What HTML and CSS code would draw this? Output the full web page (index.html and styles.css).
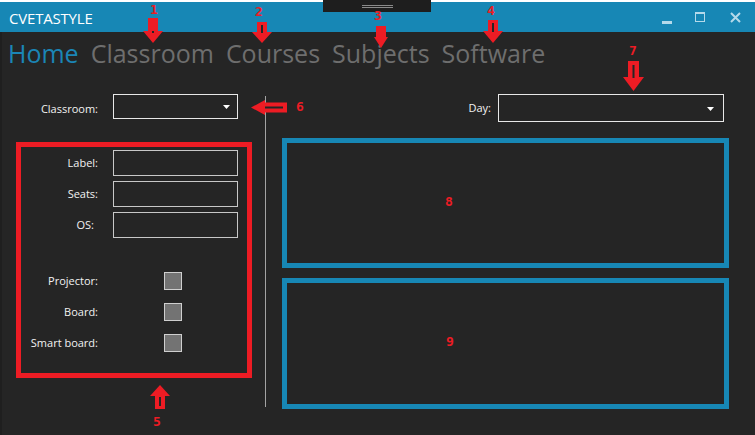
FILE: index.html
```html
<!DOCTYPE html>
<html>
<head>
<meta charset="utf-8">
<title>CVETASTYLE</title>
<link rel="stylesheet" href="styles.css">
</head>
<body>
<div class="window">
  <header class="titlebar">
    <span class="title">CVETASTYLE</span>
    <div class="controls">
      <svg class="ctl ctl-min" width="10" height="10" viewBox="0 0 10 10"><rect x="0" y="7" width="10" height="3" fill="#b4d9ea"/></svg>
      <svg class="ctl ctl-max" width="10" height="10" viewBox="0 0 10 10"><rect x="0.5" y="0.5" width="9" height="9" fill="none" stroke="#b4d9ea" stroke-width="1"/><rect x="0" y="0" width="10" height="2" fill="#b4d9ea"/></svg>
      <svg class="ctl ctl-close" width="11" height="11" viewBox="0 0 11 11"><path d="M1 1 L10 10 M10 1 L1 10" stroke="#b4d9ea" stroke-width="2" fill="none"/></svg>
    </div>
  </header>
  <div class="handle"><i></i><i></i></div>

  <div class="content">
    <nav class="nav">
      <span class="nav-item active">Home</span>
      <span class="nav-item">Classroom</span>
      <span class="nav-item">Courses</span>
      <span class="nav-item">Subjects</span>
      <span class="nav-item">Software</span>
    </nav>

    <div class="main">
      <div class="left">
        <div class="top-row">
          <label class="lbl lbl-top">Classroom:</label>
          <div class="combo combo-small">
            <svg class="caret" width="7" height="4" viewBox="0 0 7 4"><polygon points="0,0 7,0 3.5,4" fill="#ffffff"/></svg>
          </div>
        </div>
        <div class="panel panel-red">
          <div class="row">
            <label class="lbl">Label:</label>
            <div class="textbox"></div>
          </div>
          <div class="row">
            <label class="lbl">Seats:</label>
            <div class="textbox"></div>
          </div>
          <div class="row">
            <label class="lbl lbl-os">OS:</label>
            <div class="textbox"></div>
          </div>
          <div class="row check-row first-check">
            <label class="lbl">Projector:</label>
            <div class="checkbox"></div>
          </div>
          <div class="row check-row">
            <label class="lbl">Board:</label>
            <div class="checkbox"></div>
          </div>
          <div class="row check-row">
            <label class="lbl">Smart board:</label>
            <div class="checkbox"></div>
          </div>
        </div>
      </div>

      <div class="divider-col"><div class="divider"></div></div>

      <div class="right">
        <div class="day-row">
          <label class="lbl-day">Day:</label>
          <div class="combo combo-wide">
            <svg class="caret" width="7" height="4" viewBox="0 0 7 4"><polygon points="0,0 7,0 3.5,4" fill="#ffffff"/></svg>
          </div>
        </div>
        <div class="panel panel-blue panel-8"></div>
        <div class="panel panel-blue panel-9"></div>
      </div>
    </div>
  </div>

  <div class="annotations">
    <span class="num n1">1</span>
    <span class="num n2">2</span>
    <span class="num n3">3</span>
    <span class="num n4">4</span>
    <span class="num n5">5</span>
    <span class="num n6">6</span>
    <span class="num n7">7</span>
    <span class="num n8">8</span>
    <span class="num n9">9</span>

    <svg class="arrow a1" width="20" height="25" viewBox="0 0 20 25"><rect x="5" y="0" width="10" height="14" fill="#ed1c24"/><polygon points="0,13 20,13 10,25" fill="#ed1c24"/><rect x="9" y="13" width="2" height="2" fill="#252525"/></svg>
    <svg class="arrow a2" width="20" height="21" viewBox="0 0 20 21"><rect x="5" y="0" width="10" height="11" fill="#ed1c24"/><polygon points="0,10 20,10 10,21" fill="#ed1c24"/><rect x="9" y="3" width="2" height="8" fill="#252525"/></svg>
    <svg class="arrow a3" width="14" height="22" viewBox="0 0 14 22"><rect x="2" y="0" width="10" height="12" fill="#ed1c24"/><polygon points="0,11 14,11 7,22" fill="#ed1c24"/></svg>
    <svg class="arrow a4" width="20" height="23" viewBox="0 0 20 23"><rect x="5" y="0" width="10" height="12" fill="#ed1c24"/><polygon points="0,11 20,11 10,23" fill="#ed1c24"/><rect x="9" y="3" width="2" height="9" fill="#252525"/></svg>
    <svg class="arrow a5" width="20" height="24" viewBox="0 0 20 24"><polygon points="10,0 20,11 0,11" fill="#ed1c24"/><rect x="5" y="10" width="10" height="14" fill="#ed1c24"/><rect x="9" y="12" width="2" height="9" fill="#252525"/></svg>
    <svg class="arrow a6" width="36" height="15" viewBox="0 0 36 15"><polygon points="0,7.5 14,0 14,15" fill="#ed1c24"/><rect x="13" y="2.5" width="23" height="10" fill="#ed1c24"/><rect x="14" y="6.5" width="18" height="2" fill="#252525"/></svg>
    <svg class="arrow a7" width="21" height="30" viewBox="0 0 21 30"><rect x="5" y="0" width="11" height="17" fill="#ed1c24"/><polygon points="0,16 21,16 10.5,30" fill="#ed1c24"/><rect x="9.5" y="4" width="2" height="13" fill="#252525"/></svg>
  </div>
</div>
</body>
</html>
```

FILE: styles.css
```css
html, body {
  margin: 0;
  padding: 0;
  background: #ffffff;
}

body {
  font-family: "Open Sans", "Noto Sans", "DejaVu Sans", sans-serif;
}

.window {
  position: relative;
  width: 755px;
  height: 435px;
  padding-top: 2px;
  box-sizing: border-box;
  overflow: hidden;
  background: #ffffff;
}

.titlebar {
  height: 30px;
  background: #1787b5;
  display: flex;
  align-items: center;
  justify-content: space-between;
  padding-left: 9px;
  padding-right: 14px;
}

.title {
  color: #ffffff;
  font-size: 15px;
  line-height: 20px;
  letter-spacing: -0.2px;
  padding-top: 1px;
}

.controls {
  display: flex;
  align-items: flex-start;
  height: 11px;
  padding-top: 1px;
}

.ctl { display: block; }
.ctl-min { margin-top: 2px; }
.ctl-max { margin-left: 23px; }
.ctl-close { margin-left: 25px; }

.handle {
  position: absolute;
  left: 323px;
  top: 0;
  width: 108px;
  height: 12px;
  background: #1e1e1e;
}

.handle i {
  position: absolute;
  left: 39px;
  width: 31px;
  height: 1px;
  background: #8a8a8a;
}
.handle i:first-child { top: 5px; }
.handle i:last-child { top: 7px; }

.content {
  height: 403px;
  background: #252525;
  box-sizing: border-box;
  border-left: 2px solid #1f1f1f;
}

.nav {
  display: flex;
  gap: 12px;
  padding-left: 6px;
  padding-top: 5px;
  font-size: 25px;
  line-height: 33px;
  color: #6e6e6e;
}

.nav-item.active {
  color: #1b86b6;
}

.main {
  display: grid;
  grid-template-columns: 236px 30px 447px;
  margin-top: 24px;
  padding-left: 14px;
}

.lbl {
  width: 77px;
  margin-right: 15px;
  text-align: right;
  color: #f2f2f2;
  font-size: 11px;
  line-height: 16px;
  white-space: nowrap;
}

.top-row {
  display: flex;
  align-items: center;
  height: 25px;
}

.lbl-top {
  width: 82px;
  padding-top: 4px;
}

.lbl-os {
  width: 73px;
  margin-right: 19px;
}

.combo {
  box-sizing: border-box;
  border: 1px solid #e8e8e8;
  display: flex;
  align-items: center;
  justify-content: flex-end;
}

.combo-small {
  width: 125px;
  height: 25px;
  padding-right: 7px;
  padding-top: 1px;
}

.combo-wide {
  width: 226px;
  height: 28px;
  padding-right: 9px;
  padding-top: 1px;
}

.caret { display: block; }

.panel {
  box-sizing: border-box;
  border-style: solid;
  border-width: 5px;
}

.panel-red {
  margin-top: 23px;
  width: 236px;
  height: 236px;
  border-color: #ed1c24;
  padding-top: 3px;
}

.row {
  display: flex;
  align-items: center;
  height: 26px;
  margin-top: 5px;
}

.row:first-child { margin-top: 0; }

.textbox {
  box-sizing: border-box;
  width: 125px;
  height: 26px;
  border: 1px solid #c8c8c8;
}

.check-row {
  height: 18px;
  margin-top: 13px;
}

.first-check { margin-top: 34px; }

.checkbox {
  box-sizing: border-box;
  width: 18px;
  height: 18px;
  margin-left: 51px;
  background: #737373;
  border: 1px solid #cfcfcf;
}

.divider-col {
  padding-left: 13px;
}

.divider {
  width: 1px;
  height: 311px;
  margin-top: 2px;
  background: #a3a3a3;
}

.right {
  display: flex;
  flex-direction: column;
}

.day-row {
  display: flex;
  align-items: center;
  justify-content: flex-end;
  height: 28px;
  padding-right: 5px;
}

.lbl-day {
  color: #f2f2f2;
  font-size: 11px;
  line-height: 16px;
  margin-right: 7px;
}

.panel-blue {
  border-color: #1787b5;
  width: 447px;
}

.panel-8 {
  margin-top: 16px;
  height: 130px;
}

.panel-9 {
  margin-top: 10px;
  height: 131px;
}

/* annotation overlays */
.annotations {
  position: absolute;
  left: 0;
  top: 0;
  width: 755px;
  height: 435px;
  pointer-events: none;
}

.num {
  position: absolute;
  font-family: "DejaVu Sans Mono", monospace;
  font-weight: bold;
  font-size: 13px;
  line-height: 13px;
  color: #ed1c24;
}

.n1 { left: 150px; top: 3px; }
.n2 { left: 255px; top: 5px; }
.n3 { left: 374px; top: 9px; }
.n4 { left: 487px; top: 4px; }
.n5 { left: 153px; top: 415px; }
.n6 { left: 296px; top: 100px; }
.n7 { left: 629px; top: 44px; }
.n8 { left: 445px; top: 195px; }
.n9 { left: 446px; top: 335px; }

.arrow {
  position: absolute;
  display: block;
}

.a1 { left: 143px; top: 18px; }
.a2 { left: 252px; top: 22px; }
.a3 { left: 374px; top: 26px; }
.a4 { left: 483px; top: 20px; }
.a5 { left: 150px; top: 385px; }
.a6 { left: 251px; top: 100px; }
.a7 { left: 623px; top: 61px; }
```
